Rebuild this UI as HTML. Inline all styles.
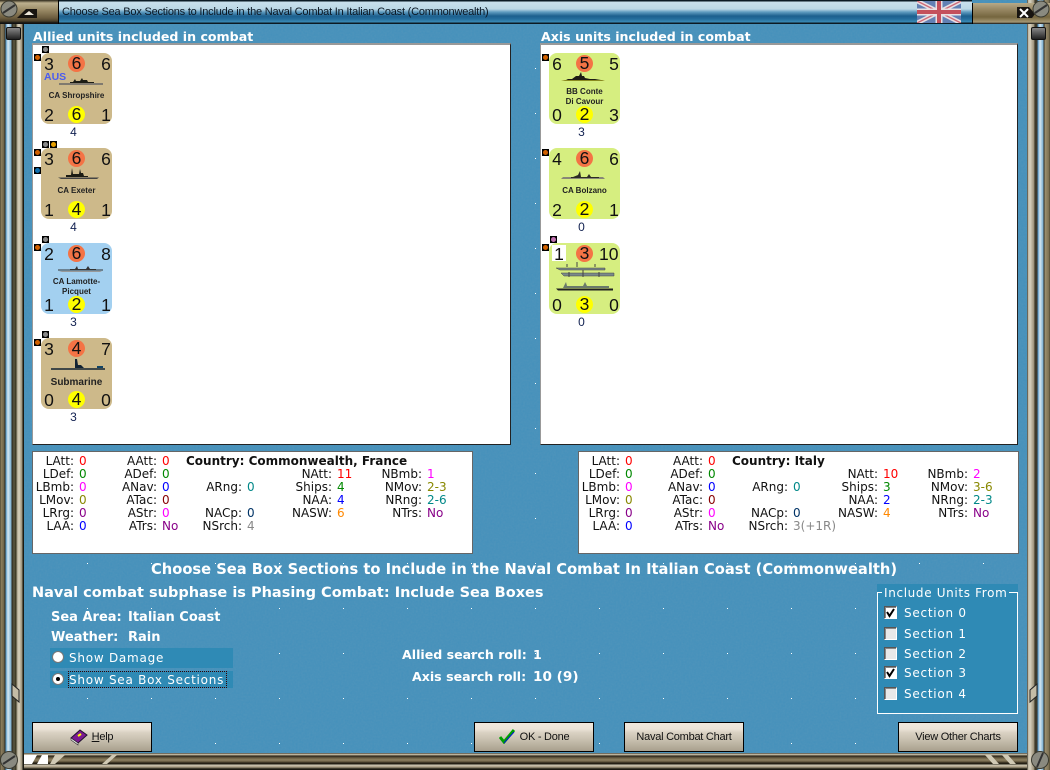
<!DOCTYPE html>
<html><head><meta charset="utf-8"><style>
html,body{margin:0;padding:0;width:1050px;height:770px;overflow:hidden;background:#3f8eb8}
body{position:relative;font-family:"DejaVu Sans","Liberation Sans",sans-serif}
.a{position:absolute}
.h{position:absolute;color:#fff;font-weight:bold;white-space:nowrap;line-height:16px}
.box{position:absolute;background:#fff;box-sizing:border-box}
.c{position:absolute;width:71px;height:71px;border-radius:8px;font:17.5px/20px "Liberation Sans",sans-serif;color:#111}
.tan{background:#cdb98a}.blu{background:#a3d0f0}.grn{background:#d6ee80}
.c b{position:absolute;font-weight:normal;width:16px;text-align:center}
.tl{left:0;top:1px}.tr{left:57px;top:1px}.bl{left:0;top:52px}.br{left:57px;top:52px}
.c i{position:absolute;left:27px;width:17px;height:17px;border-radius:50%;font-style:normal;text-align:center;line-height:17px}
.ct{top:2px;background:#f47345}.cb{top:53px;background:#ff0}
.c u{position:absolute;left:2px;width:67px;text-align:center;text-decoration:none;font:bold 8px/10px "Liberation Sans",sans-serif;color:#222}
.n{position:absolute;width:71px;text-align:center;font:12px/14px "Liberation Sans",sans-serif;color:#102050}
.m{position:absolute;width:7px;height:7px;background:#000}
.m:after{content:"";position:absolute;left:1px;top:1px;width:5px;height:5px;border-radius:50%;background:var(--k)}
.s{position:absolute;width:0;font-size:12px;line-height:13px}
.s em{position:absolute;right:0;top:0;font-style:normal;white-space:nowrap;color:#111}
.s span{position:absolute;left:5px;top:0;white-space:nowrap}
.btn{position:absolute;width:120px;height:30px;box-sizing:border-box;border:1px solid #000;background:linear-gradient(#f1e9de 0,#ebe3d7 22%,#d9d1c2 35%,#cbc3b3 55%,#bcb4a2 75%,#a9a08d 100%);font:11px/29px "Liberation Sans",sans-serif;letter-spacing:-.25px;color:#111;text-align:center;white-space:nowrap}
.lbl{position:absolute;color:#fff;font-size:12px;line-height:16px;letter-spacing:.75px;white-space:nowrap}
.cb2{position:absolute;width:13px;height:13px;left:884px;box-sizing:border-box;border:1px solid #555;border-right-color:#fff;border-bottom-color:#fff;background:#e8e8e8;box-shadow:inset 1px 1px 0 #888}
.cb2.on{background:#fff}
.rd{position:absolute;left:52px;width:12px;height:12px;border-radius:50%;background:#fff;box-sizing:border-box;border:1px solid #777}
.bar{position:absolute}
.cty{position:absolute;left:186px;top:455px;font-size:12px;font-weight:bold;line-height:13px;color:#111;white-space:nowrap}
</style></head><body>
<svg class="a" style="left:0;top:0" width="1050" height="770"><defs>
<filter id="nz" x="0" y="0" width="100%" height="100%"><feTurbulence type="fractalNoise" baseFrequency=".55" numOctaves="2" seed="4"/><feColorMatrix values="0 0 0 0 .08  0 0 0 0 .3  0 0 0 0 .5  0 0 0 1.1 -.1"/></filter>
<pattern id="dots" x="23" y="23" width="64" height="45" patternUnits="userSpaceOnUse"><rect width="1" height="1" fill="#fff"/></pattern></defs>
<rect width="1050" height="770" fill="#4490bb"/><rect width="1050" height="770" filter="url(#nz)"/><rect width="1050" height="770" fill="url(#dots)"/></svg>

<!-- title bar -->
<div class="bar" style="left:58px;top:0;width:914px;height:24px;background:linear-gradient(#0a1a24 0,#0a1a24 1px,#c8e0ec 2px,#bcd8e6 9px,#5f9cc0 12px,#1c5f8e 16px,#246d9c 19px,#3a8ab5 22px,#0c1a22 23px)"></div>
<div class="a" style="left:62px;top:5px;font:11px/14px 'Liberation Sans',sans-serif;letter-spacing:-.21px;color:#0a1622;white-space:nowrap">Choose Sea Box Sections to Include in the Naval Combat In Italian Coast (Commonwealth)</div>
<svg class="a" style="left:917px;top:1px" width="44" height="22" viewBox="0 0 44 22"><rect width="44" height="22" fill="#6280b4"/><path d="M0 0L44 22M44 0L0 22" stroke="#e8e0e4" stroke-width="4.5"/><path d="M0 0L44 22M44 0L0 22" stroke="#cf6a78" stroke-width="1.4"/><path d="M22 0V22M0 11H44" stroke="#e8e0e4" stroke-width="7"/><path d="M22 0V22M0 11H44" stroke="#c4505c" stroke-width="4"/></svg>

<!-- frame -->
<div class="bar" style="left:0;top:0;width:24px;height:770px;background:linear-gradient(90deg,#3b3526 0,#8d7f5f 1px,#6e6349 4px,#2a2a24 5px,#5e9cc8 6px,#d8e8f2 8px,#7fb2d4 11px,#2e2b20 12px,#5c5844 14px,#35321f 16px,#a9a18c 17px,#d8d2c0 19px,#9a9078 22px,#1b1a12 23px,#1b1a12 24px)"></div>
<div class="bar" style="left:1027px;top:0;width:23px;height:770px;background:linear-gradient(90deg,#1b1a12 0,#bcb4a0 1px,#d8d2c0 3px,#9a9078 7px,#2c2a1c 8px,#4f4b38 9px,#2a2a24 10px,#5e9cc8 11px,#d8e8f2 13px,#7fb2d4 16px,#2a2a24 17px,#9d9070 18px,#7b6f52 22px,#4a432f 23px)"></div>
<div class="bar" style="left:0;top:0;width:58px;height:24px;background:linear-gradient(#2b2618 0,#bdb08e 3px,#9a8a66 10px,#6b5c3e 18px,#4a3f29 21px,#111 23px);border-right:1px solid #000"></div>
<div class="bar" style="left:972px;top:3px;width:78px;height:21px;background:linear-gradient(#b8aa88 0,#9a8a66 6px,#75663f 14px,#a49672 19px,#111 21px);border-left:1px solid #000;box-sizing:border-box"></div>
<svg class="a" style="left:0;top:0" width="58" height="24"><circle cx="9" cy="9" r="8" fill="#8a8a80" stroke="#3a3a30"/><path d="M3 13L15 5" stroke="#333" stroke-width="2"/><path d="M17 18L26 9H37V18Z" fill="#181410"/><path d="M24 15L29 11L34 15Z" fill="#ece6d8"/></svg>
<svg class="a" style="left:1010px;top:0" width="40" height="24"><path d="M7 7H19L25 14L22 18H7Z" fill="#181410"/><path d="M10 9L18 17M18 9L10 17" stroke="#fff" stroke-width="2"/><circle cx="31" cy="9" r="8" fill="#8a8a80" stroke="#3a3a30"/><path d="M25 13L37 5" stroke="#333" stroke-width="2"/></svg>
<div class="bar" style="left:6px;top:27px;width:13px;height:11px;background:linear-gradient(#888,#222);border:1px solid #111;border-radius:2px"></div>
<div class="bar" style="left:1031px;top:27px;width:13px;height:11px;background:linear-gradient(#888,#222);border:1px solid #111;border-radius:2px"></div>
<svg class="a" style="left:11px;top:682px" width="13" height="24"><path d="M1 2L8 8V20L1 14Z" fill="#c4bca6" stroke="#222"/></svg>
<svg class="a" style="left:1027px;top:682px" width="13" height="24"><path d="M10 2L3 8V20L10 14Z" fill="#c4bca6" stroke="#222"/></svg>
<svg class="a" style="left:0;top:750px" width="24" height="20"><circle cx="9" cy="10" r="8.5" fill="#8a8a80" stroke="#3a3a30"/><path d="M3 14L15 6" stroke="#333" stroke-width="2"/></svg>
<svg class="a" style="left:1030px;top:750px" width="20" height="20"><circle cx="10" cy="10" r="8.5" fill="#8a8a80" stroke="#3a3a30"/><path d="M7 17L13 3" stroke="#333" stroke-width="2"/></svg>
<div class="bar" style="left:24px;top:753px;width:1003px;height:17px;background:linear-gradient(#16140c 0,#cfc8b4 1px,#a99e84 2px,#2c261a 3px,#6b5f45 5px,#8f8263 7px,#5a4f38 9px,#241f14 10px,#241f14 11px,#cfc8b4 12px,#a99e84 14px,#1a1810 16px)"></div>
<svg class="a" style="left:24px;top:755px" width="100" height="9"><path d="M0 0H13L8 9H0Z" fill="#fff"/><path d="M18 0H24V9H13Z" fill="#fff"/><path d="M31 0H41L31 9H26Z" fill="#d0c9b4"/><path d="M88 0H93L83 9H78Z" fill="#d0c9b4"/></svg>
<svg class="a" style="left:980px;top:755px" width="50" height="9"><path d="M5 0H11L19 9H13ZM22 0H28L36 9H30Z" fill="#d0c9b4"/></svg>

<!-- headings -->
<div class="h" style="left:33px;top:29px;font-size:12.6px">Allied units included in combat</div>
<div class="h" style="left:541px;top:29px;font-size:12.6px">Axis units included in combat</div>

<!-- lists -->
<div class="box" style="left:32px;top:43px;width:479px;height:402px;border:1px solid #222;border-top:2px solid #999;border-left-color:#999"></div>
<div class="box" style="left:540px;top:43px;width:478px;height:402px;border:1px solid #222;border-top:2px solid #999;border-left-color:#999"></div>

<!-- allied counters -->
<div class="m" style="left:42px;top:46px;--k:#888"></div><div class="m" style="left:34px;top:54px;--k:#d06000"></div>
<div class="c tan" style="left:41px;top:53px"><b class="tl">3</b><i class="ct">6</i><b class="tr">6</b><b class="bl">2</b><i class="cb">6</i><b class="br">1</b><u style="top:38px">CA Shropshire</u><span class="a" style="left:3px;top:18px;font:bold 10.5px/12px 'Liberation Sans',sans-serif;color:#4a5cf0">AUS</span><svg class="a" style="left:17px;top:24px" width="46" height="10"><path d="M1 7H45" stroke="#666" stroke-width="1.5"/><path d="M12 6H36V5H30L29 3H25L24 1L22 4H18L17 2L15 5H12Z" fill="#1c1c14"/></svg></div>
<div class="n" style="left:38px;top:125px">4</div>

<div class="m" style="left:42px;top:141px;--k:#888"></div><div class="m" style="left:50px;top:141px;--k:#e8a000"></div><div class="m" style="left:34px;top:149px;--k:#d06000"></div><div class="m" style="left:34px;top:167px;--k:#1070b0"></div>
<div class="c tan" style="left:41px;top:148px"><b class="tl">3</b><i class="ct">6</i><b class="tr">6</b><b class="bl">1</b><i class="cb">4</i><b class="br">1</b><u style="top:38px">CA Exeter</u><svg class="a" style="left:17px;top:20px" width="42" height="13"><path d="M0 9.500L3 11H39L41 9.500Z" fill="#444"/><path d="M8 9H30V8H26L25 5H23L22 1L21 6H15L14 0L13 7H8Z" fill="#1c1c14"/></svg></div>
<div class="n" style="left:38px;top:220px">4</div>

<div class="m" style="left:42px;top:236px;--k:#888"></div><div class="m" style="left:34px;top:244px;--k:#d06000"></div>
<div class="c blu" style="left:41px;top:243px"><b class="tl">2</b><i class="ct">6</i><b class="tr">8</b><b class="bl">1</b><i class="cb">2</i><b class="br">1</b><u style="top:34px">CA Lamotte-<br>Picquet</u><svg class="a" style="left:17px;top:20px" width="46" height="11"><path d="M0 7H45" stroke="#333"/><path d="M1 8H44L42 9H4Z" fill="#999"/><path d="M12 7H38V6H32L30 3L28 6H20L19 3L17 6H12Z" fill="#333"/></svg></div>
<div class="n" style="left:38px;top:315px">3</div>

<div class="m" style="left:42px;top:331px;--k:#888"></div><div class="m" style="left:34px;top:339px;--k:#d06000"></div>
<div class="c tan" style="left:41px;top:338px"><b class="tl">3</b><i class="ct">4</i><b class="tr">7</b><b class="bl">0</b><i class="cb">4</i><b class="br">0</b><u style="top:40px;font-size:10px">Submarine</u><svg class="a" style="left:10px;top:21px" width="54" height="13"><path d="M0 10H54" stroke="#123" stroke-width="1.5"/><path d="M24 9H33L30 6H27L26 0H24Z" fill="#123"/><path d="M46 9H52V7H46Z" fill="#146"/></svg></div>
<div class="n" style="left:38px;top:410px">3</div>

<!-- axis counters -->
<div class="m" style="left:542px;top:54px;--k:#d06000"></div>
<div class="c grn" style="left:549px;top:53px"><b class="tl">6</b><i class="ct">5</i><b class="tr">5</b><b class="bl">0</b><i class="cb">2</i><b class="br">3</b><u style="top:34px">BB Conte<br>Di Cavour</u><svg class="a" style="left:12px;top:17px" width="46" height="13"><path d="M0 11H44L41 10H4Z" fill="#8a8a20"/><path d="M5 10H40L34 9H29L24 8L23 6H21L20 2L18 6H15L11 9H7Z" fill="#1c1c14"/></svg></div>
<div class="n" style="left:546px;top:125px">3</div>

<div class="m" style="left:542px;top:149px;--k:#d06000"></div>
<div class="c grn" style="left:549px;top:148px"><b class="tl">4</b><i class="ct">6</i><b class="tr">6</b><b class="bl">2</b><i class="cb">2</i><b class="br">1</b><u style="top:38px">CA Bolzano</u><svg class="a" style="left:12px;top:22px" width="46" height="11"><path d="M0 9H44L42 7H2Z" fill="#887"/><path d="M10 8H38V7H30L28 4L26 7H20L19 1L17 5L12 7H10Z" fill="#2c2c24"/></svg></div>
<div class="n" style="left:546px;top:220px">0</div>

<div class="m" style="left:550px;top:236px;--k:#c070b0"></div><div class="m" style="left:542px;top:244px;--k:#d06000"></div>
<div class="c grn" style="left:549px;top:243px"><div class="a" style="left:3px;top:2px;width:14px;height:16px;background:#fff"></div><b class="tl" style="left:2px">1</b><i class="ct">3</i><b class="tr" style="left:50px;width:19px">10</b><b class="bl">0</b><i class="cb">3</i><b class="br">0</b><svg class="a" style="left:6px;top:19px" width="60" height="30"><path d="M1 6H50V8H5ZM6 11H59V14H9Z" fill="#7a8a8a" stroke="#444" stroke-width=".5"/><path d="M12 5V2M22 5V0M40 5V2M14 15V10M28 15V8M44 15V10" stroke="#444"/><path d="M1 26.500H58V28.500H3Z" fill="#222"/><path d="M8 26H54V24H32L30 20L28 24H12L11 20L9 24Z" fill="#6a7a6a"/></svg></div>
<div class="n" style="left:546px;top:315px">0</div>

<!-- stat boxes -->
<div class="box" style="left:32px;top:451px;width:441px;height:103px;border:1px solid #666"></div>
<div class="box" style="left:578px;top:451px;width:441px;height:103px;border:1px solid #666"></div>

<div class="a" style="left:0;top:0">
<div class="s" style="left:74px;top:455px"><em>LAtt:</em><span style="color:#f00">0</span></div>
<div class="s" style="left:74px;top:468px"><em>LDef:</em><span style="color:#080">0</span></div>
<div class="s" style="left:74px;top:481px"><em>LBmb:</em><span style="color:#f0f">0</span></div>
<div class="s" style="left:74px;top:494px"><em>LMov:</em><span style="color:#880">0</span></div>
<div class="s" style="left:74px;top:507px"><em>LRrg:</em><span style="color:#808">0</span></div>
<div class="s" style="left:74px;top:520px"><em>LAA:</em><span style="color:#00f">0</span></div>
<div class="s" style="left:157px;top:455px"><em>AAtt:</em><span style="color:#f00">0</span></div>
<div class="s" style="left:157px;top:468px"><em>ADef:</em><span style="color:#080">0</span></div>
<div class="s" style="left:157px;top:481px"><em>ANav:</em><span style="color:#00f">0</span></div>
<div class="s" style="left:157px;top:494px"><em>ATac:</em><span style="color:#800">0</span></div>
<div class="s" style="left:157px;top:507px"><em>AStr:</em><span style="color:#f0f">0</span></div>
<div class="s" style="left:157px;top:520px"><em>ATrs:</em><span style="color:#808">No</span></div>
<div class="cty">Country: Commonwealth, France</div>
<div class="s" style="left:242px;top:481px"><em>ARng:</em><span style="color:#088">0</span></div>
<div class="s" style="left:242px;top:507px"><em>NACp:</em><span style="color:#036">0</span></div>
<div class="s" style="left:242px;top:520px"><em>NSrch:</em><span style="color:#888">4</span></div>
<div class="s" style="left:332px;top:468px"><em>NAtt:</em><span style="color:#f00">11</span></div>
<div class="s" style="left:332px;top:481px"><em>Ships:</em><span style="color:#080">4</span></div>
<div class="s" style="left:332px;top:494px"><em>NAA:</em><span style="color:#00f">4</span></div>
<div class="s" style="left:332px;top:507px"><em>NASW:</em><span style="color:#f80">6</span></div>
<div class="s" style="left:422px;top:468px"><em>NBmb:</em><span style="color:#f0f">1</span></div>
<div class="s" style="left:422px;top:481px"><em>NMov:</em><span style="color:#880">2-3</span></div>
<div class="s" style="left:422px;top:494px"><em>NRng:</em><span style="color:#088">2-6</span></div>
<div class="s" style="left:422px;top:507px"><em>NTrs:</em><span style="color:#808">No</span></div>
</div>
<div class="a" style="left:546px;top:0">
<div class="s" style="left:74px;top:455px"><em>LAtt:</em><span style="color:#f00">0</span></div>
<div class="s" style="left:74px;top:468px"><em>LDef:</em><span style="color:#080">0</span></div>
<div class="s" style="left:74px;top:481px"><em>LBmb:</em><span style="color:#f0f">0</span></div>
<div class="s" style="left:74px;top:494px"><em>LMov:</em><span style="color:#880">0</span></div>
<div class="s" style="left:74px;top:507px"><em>LRrg:</em><span style="color:#808">0</span></div>
<div class="s" style="left:74px;top:520px"><em>LAA:</em><span style="color:#00f">0</span></div>
<div class="s" style="left:157px;top:455px"><em>AAtt:</em><span style="color:#f00">0</span></div>
<div class="s" style="left:157px;top:468px"><em>ADef:</em><span style="color:#080">0</span></div>
<div class="s" style="left:157px;top:481px"><em>ANav:</em><span style="color:#00f">0</span></div>
<div class="s" style="left:157px;top:494px"><em>ATac:</em><span style="color:#800">0</span></div>
<div class="s" style="left:157px;top:507px"><em>AStr:</em><span style="color:#f0f">0</span></div>
<div class="s" style="left:157px;top:520px"><em>ATrs:</em><span style="color:#808">No</span></div>
<div class="cty">Country: Italy</div>
<div class="s" style="left:242px;top:481px"><em>ARng:</em><span style="color:#088">0</span></div>
<div class="s" style="left:242px;top:507px"><em>NACp:</em><span style="color:#036">0</span></div>
<div class="s" style="left:242px;top:520px"><em>NSrch:</em><span style="color:#888">3(+1R)</span></div>
<div class="s" style="left:332px;top:468px"><em>NAtt:</em><span style="color:#f00">10</span></div>
<div class="s" style="left:332px;top:481px"><em>Ships:</em><span style="color:#080">3</span></div>
<div class="s" style="left:332px;top:494px"><em>NAA:</em><span style="color:#00f">2</span></div>
<div class="s" style="left:332px;top:507px"><em>NASW:</em><span style="color:#f80">4</span></div>
<div class="s" style="left:422px;top:468px"><em>NBmb:</em><span style="color:#f0f">2</span></div>
<div class="s" style="left:422px;top:481px"><em>NMov:</em><span style="color:#880">3-6</span></div>
<div class="s" style="left:422px;top:494px"><em>NRng:</em><span style="color:#088">2-3</span></div>
<div class="s" style="left:422px;top:507px"><em>NTrs:</em><span style="color:#808">No</span></div>
</div>

<!-- lower text -->
<div class="h" style="left:151px;top:562px;font-size:14.7px">Choose Sea Box Sections to Include in the Naval Combat In Italian Coast (Commonwealth)</div>
<div class="h" style="left:32px;top:585px;font-size:14.5px">Naval combat subphase is Phasing Combat: Include Sea Boxes</div>
<div class="h" style="left:51px;top:610px;font-size:13px">Sea Area:</div><div class="h" style="left:128px;top:610px;font-size:13px">Italian Coast</div>
<div class="h" style="left:51px;top:630px;font-size:13px">Weather:</div><div class="h" style="left:128px;top:630px;font-size:13px">Rain</div>
<div class="a" style="left:50px;top:648px;width:183px;height:20px;background:#2f8ab5"></div>
<div class="a" style="left:50px;top:671px;width:183px;height:17px;background:#2f8ab5"></div>
<div class="rd" style="top:651px"></div><div class="rd" style="top:673px"></div><div class="a" style="left:56px;top:677px;width:4px;height:4px;border-radius:50%;background:#000"></div>
<div class="lbl" style="left:69px;top:650px">Show Damage</div>
<div class="lbl" style="left:69px;top:672px">Show Sea Box Sections</div>
<div class="a" style="left:68px;top:671px;width:157px;height:15px;border:1px dotted #300"></div>
<div class="h" style="left:402px;top:647px;font-size:12.6px">Allied search roll:</div><div class="h" style="left:533px;top:647px;font-size:12.6px">1</div>
<div class="h" style="left:412px;top:669px;font-size:12.6px">Axis search roll:</div><div class="h" style="left:533px;top:669px;font-size:13.6px">10 (9)</div>

<!-- group -->
<div class="a" style="left:877px;top:584px;width:141px;height:130px;background:#2f8ab5"></div>
<div class="a" style="left:877px;top:592px;width:139px;height:120px;border:1px solid #fff"></div>
<div class="lbl" style="left:882px;top:585px;background:#2f8ab5;padding:0 2px;letter-spacing:.65px">Include Units From</div>
<div class="cb2 on" style="top:606px"></div><div class="cb2" style="top:627px"></div><div class="cb2" style="top:647px"></div><div class="cb2 on" style="top:666px"></div><div class="cb2" style="top:687px"></div>
<svg class="a" style="left:884px;top:606px" width="13" height="13"><path d="M3 6L5.500 10L10 3" fill="none" stroke="#000" stroke-width="2"/></svg>
<svg class="a" style="left:884px;top:666px" width="13" height="13"><path d="M3 6L5.500 10L10 3" fill="none" stroke="#000" stroke-width="2"/></svg>
<div class="lbl" style="left:904px;top:605px">Section 0</div>
<div class="lbl" style="left:904px;top:626px">Section 1</div>
<div class="lbl" style="left:904px;top:646px">Section 2</div>
<div class="lbl" style="left:904px;top:665px">Section 3</div>
<div class="lbl" style="left:904px;top:686px">Section 4</div>

<!-- buttons -->
<div class="btn" style="left:32px;top:722px;padding-left:21px"><span style="text-decoration:underline">H</span>elp</div>
<svg class="a" style="left:70px;top:728px" width="18" height="18"><path d="M1 10L10 2L17 7L8 15Z" fill="#7a1a90" stroke="#201030"/><path d="M1 10L8 15V17L1 12Z" fill="#e8e8e8" stroke="#333" stroke-width=".6"/><path d="M8 8L11 6" stroke="#ff0" stroke-width="2"/></svg>
<div class="btn" style="left:474px;top:722px;padding-left:21px">OK - Done</div>
<svg class="a" style="left:499px;top:728px" width="16" height="16"><path d="M1 9L5 14L15 2" fill="none" stroke="#00a000" stroke-width="3"/><path d="M5 15L15 4" stroke="#0018d0" stroke-width="1"/></svg>
<div class="btn" style="left:624px;top:722px">Naval Combat Chart</div>
<div class="btn" style="left:898px;top:722px">View Other Charts</div>
</body></html>
